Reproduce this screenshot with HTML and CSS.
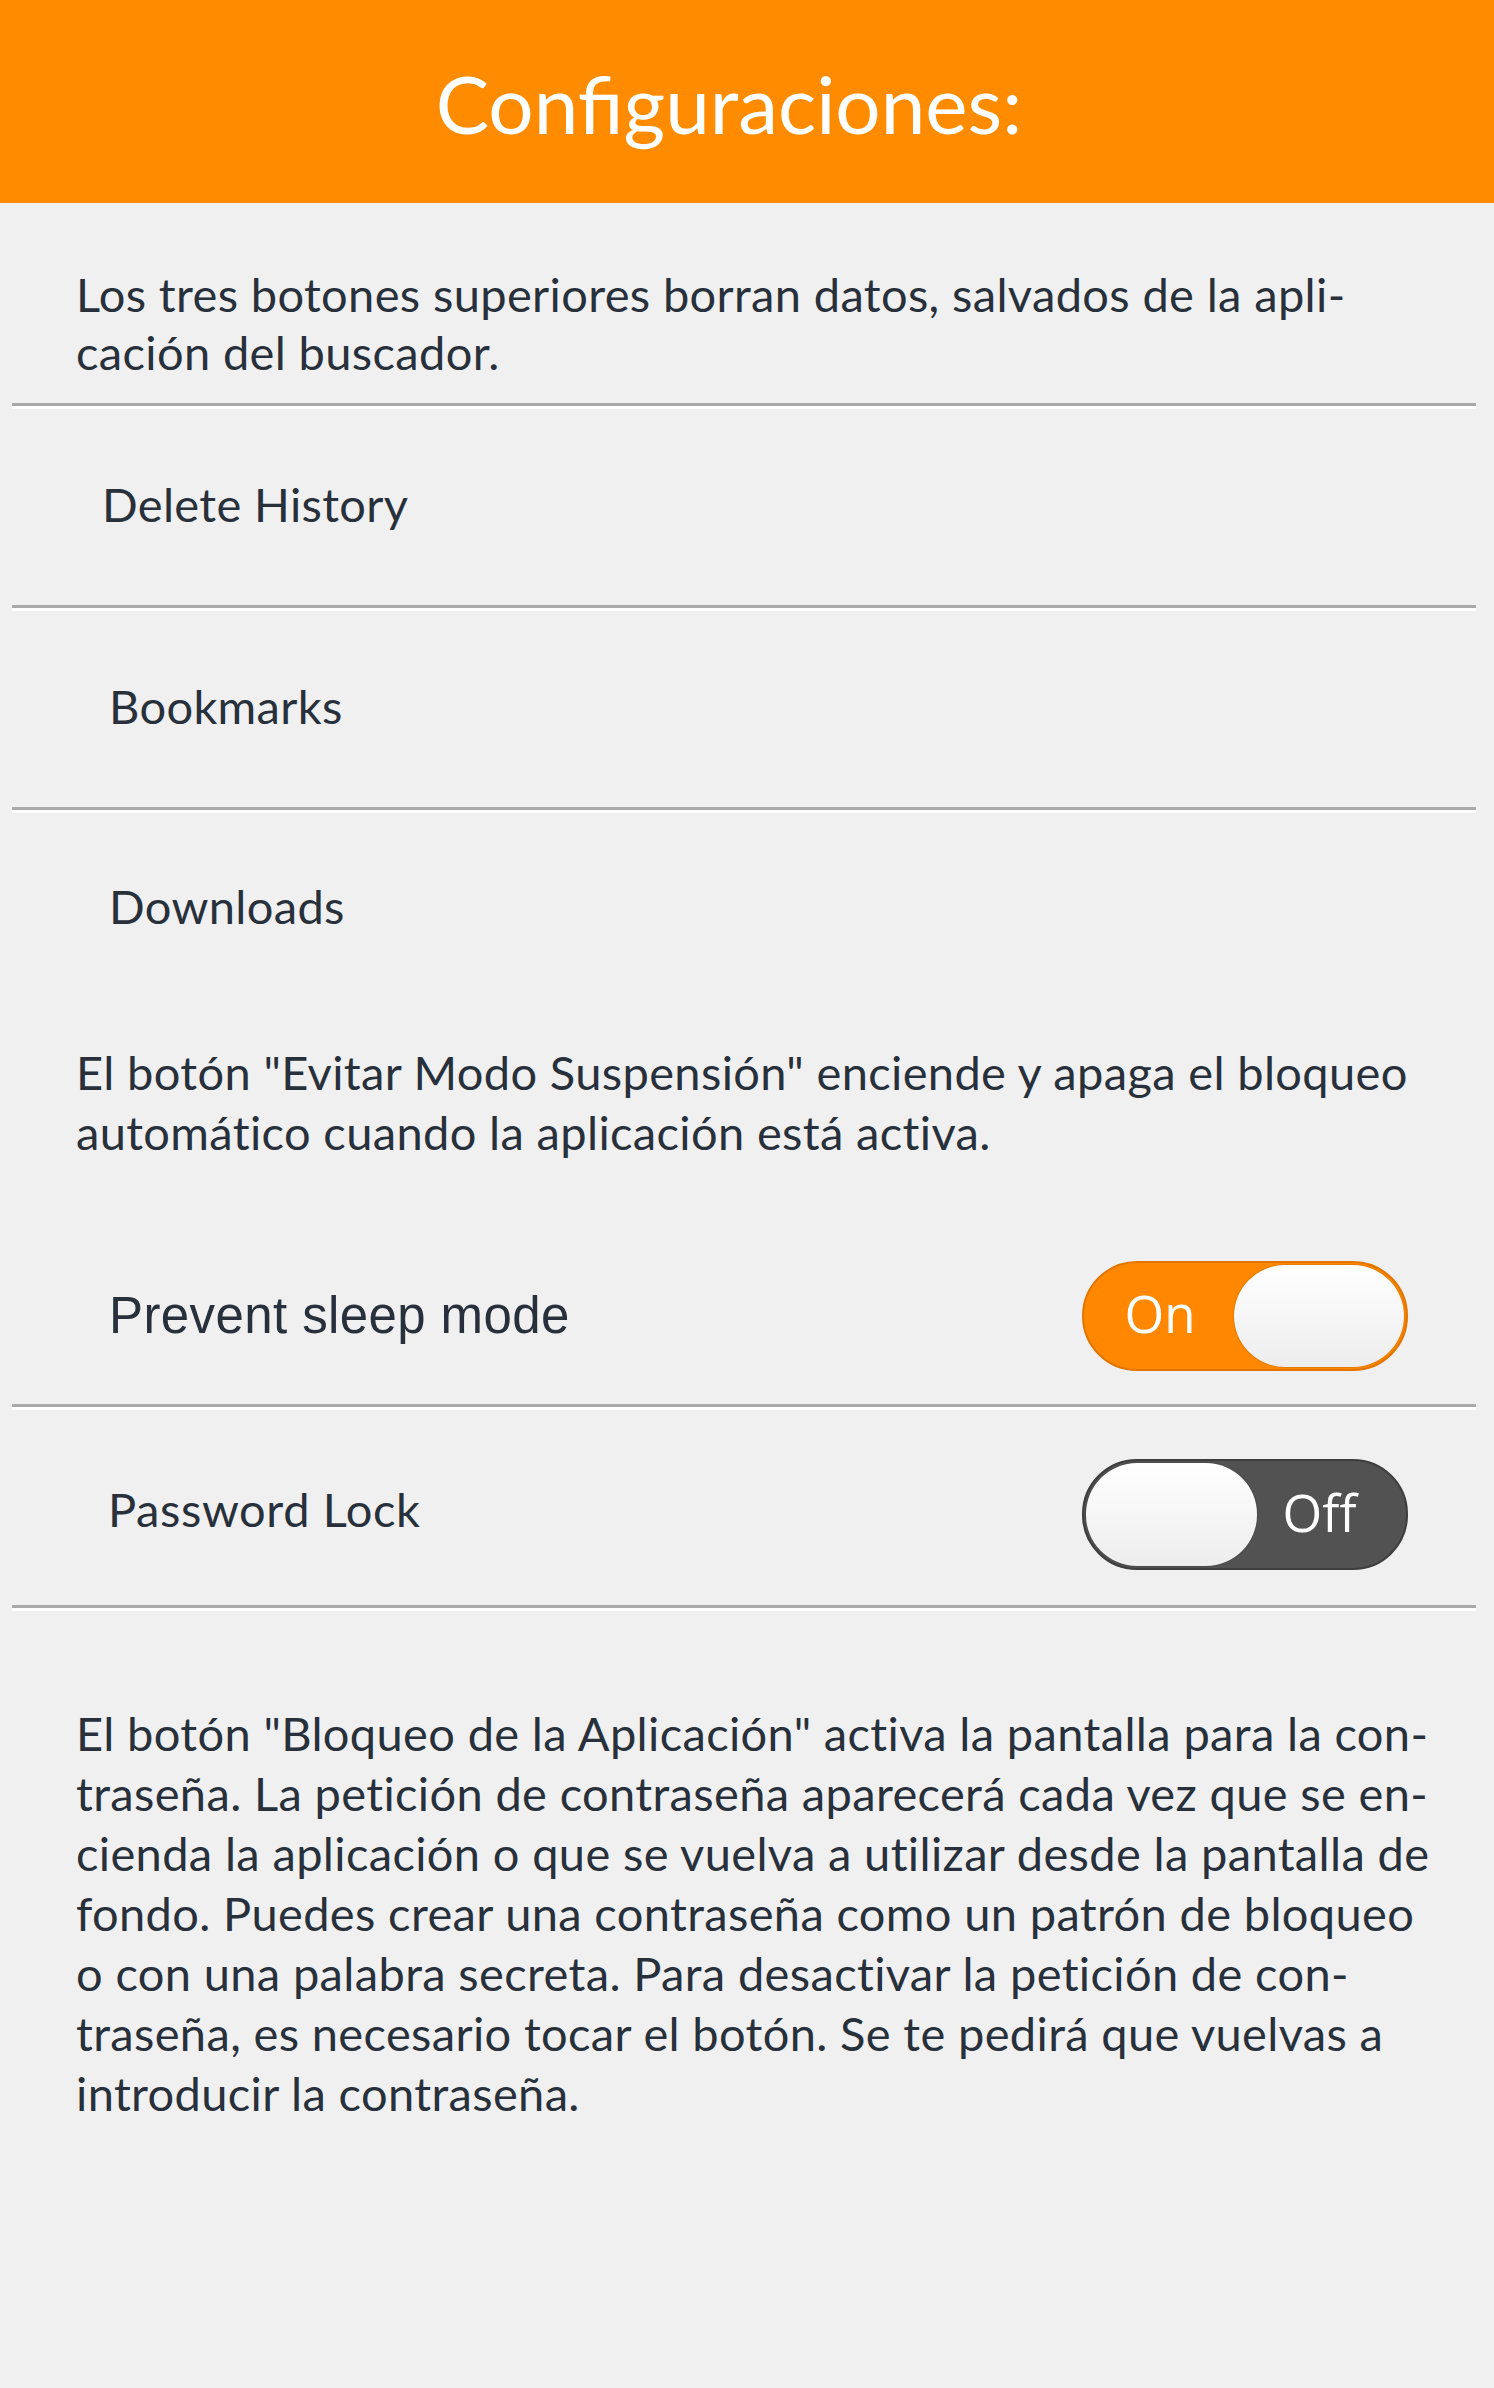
FILE: index.html
```
<!DOCTYPE html>
<html lang="es">
<head>
<meta charset="utf-8">
<title>Configuraciones</title>
<link rel="stylesheet" href="styles.css">
</head>
<body>
<header class="topbar">
  <h1 class="title">Configuraciones:</h1>
</header>

<p class="intro">Los tres botones superiores borran datos, salvados de la apli-<br>cación del buscador.</p>
<div class="sep"></div>
<div class="row row-delete">Delete History</div>
<div class="sep"></div>
<div class="row">Bookmarks</div>
<div class="sep"></div>
<div class="row row-last">Downloads</div>

<p class="para para-sleep">El botón "Evitar Modo Suspensión" enciende y apaga el bloqueo<br>automático cuando la aplicación está activa.</p>

<div class="toggle-row toggle-row-sleep">
  <span class="toggle-label toggle-label-helv">Prevent sleep mode</span>
  <div class="switch switch-on">
    <span class="switch-text">On</span>
    <span class="knob"></span>
  </div>
</div>
<div class="sep"></div>
<div class="toggle-row toggle-row-lock">
  <span class="toggle-label toggle-label-lock">Password Lock</span>
  <div class="switch switch-off">
    <span class="knob"></span>
    <span class="switch-text switch-text-off">Off</span>
  </div>
</div>
<div class="sep"></div>

<p class="para para-lock">El botón "Bloqueo de la Aplicación" activa la pantalla para la con-<br>traseña. La petición de contraseña aparecerá cada vez que se en-<br>cienda la aplicación o que se vuelva a utilizar desde la pantalla de<br>fondo. Puedes crear una contraseña como un patrón de bloqueo<br>o con una palabra secreta. Para desactivar la petición de con-<br>traseña, es necesario tocar el botón. Se te pedirá que vuelvas a<br>introducir la contraseña.</p>
</body>
</html>
```

FILE: styles.css
```
html, body {
  margin: 0;
  padding: 0;
  background: #f0f0f0;
}

body {
  font-family: "Lato", "Open Sans", sans-serif;
  color: #28313b;
  font-size: 47px;
  line-height: 58px;
  letter-spacing: 0.35px;
}

.topbar {
  box-sizing: border-box;
  height: 203px;
  padding-top: 63px;
  padding-right: 36px;
  background: #ff8c00;
  display: flex;
  justify-content: center;
}

.title {
  margin: 0;
  font-weight: 400;
  font-size: 80px;
  line-height: 80px;
  letter-spacing: 0;
  color: #ffffff;
}

.intro {
  box-sizing: border-box;
  margin: 0;
  height: 200px;
  padding: 62px 0 0 76px;
  white-space: nowrap;
}

.sep {
  height: 0;
  margin: 0 18px 0 12px;
  border-top: 3px solid #a9a9a9;
  border-bottom: 3px solid #ffffff;
}

.row {
  box-sizing: border-box;
  height: 196px;
  padding: 66px 0 0 109px;
}

.row-delete {
  padding-left: 102px;
}

.row-last {
  height: 122px;
  padding-top: 64px;
}

.para {
  margin: 0;
  padding-left: 76px;
  line-height: 60px;
  white-space: nowrap;
}

.para-sleep {
  margin-top: 107px;
}

.para-lock {
  margin-top: 92px;
}

.toggle-row {
  display: flex;
  align-items: center;
  justify-content: space-between;
  padding-left: 108px;
  padding-right: 86px;
}

.toggle-row-sleep {
  margin-top: 99px;
  margin-bottom: 33px;
}

.toggle-row-lock {
  padding-top: 49px;
  padding-bottom: 35px;
}

.toggle-label-helv {
  font-family: "Liberation Sans", Arial, sans-serif;
  font-size: 51px;
  letter-spacing: 0.4px;
  padding-left: 1px;
}

.toggle-label-lock {
  margin-bottom: 12px;
  letter-spacing: 0.6px;
}

.switch {
  box-sizing: border-box;
  width: 326px;
  height: 110px;
  border-radius: 55px;
  padding: 2px;
  display: flex;
  align-items: center;
}

.switch-on {
  background: #ff8800;
  border: 2px solid #e27400;
}

.switch-off {
  height: 111px;
  background: #525252;
  border: 2px solid #3e3e3e;
}

.switch-text {
  flex: 1;
  text-align: center;
  font-family: "Open Sans", sans-serif;
  font-size: 51px;
  line-height: 60px;
  letter-spacing: 0;
  color: #ffffff;
  padding-bottom: 6px;
}

.switch-text-off {
  padding-right: 22px;
}

.knob {
  display: block;
  width: 170px;
  height: 102px;
  border-radius: 51px;
  background: linear-gradient(#ffffff, #ededed);
  box-shadow: 0 0 2px rgba(0, 0, 0, 0.35);
}

.switch-off .knob {
  width: 171px;
  height: 103px;
}
```
